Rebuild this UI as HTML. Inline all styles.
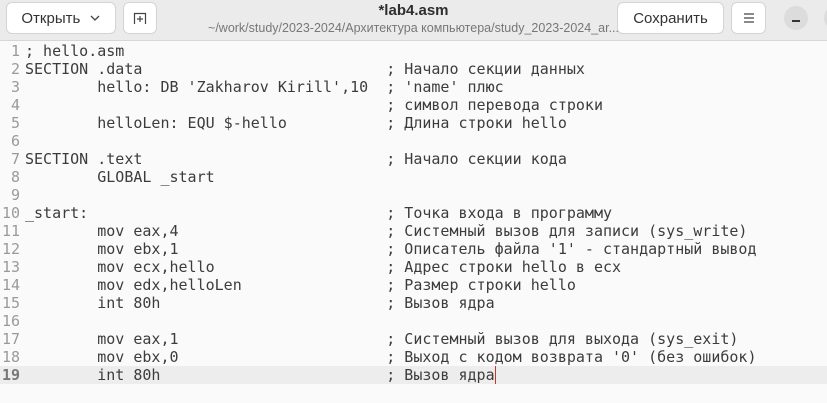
<!DOCTYPE html>
<html><head><meta charset="utf-8"><style>
*{margin:0;padding:0;box-sizing:border-box}
body{width:827px;height:403px;overflow:hidden;background:#fafafa;font-family:"Liberation Sans","DejaVu Sans",sans-serif;position:relative}
.hdr{position:absolute;left:0;top:0;width:827px;height:41px;background:#ebebeb;border-bottom:1px solid #d6d6d6}
.btn{position:absolute;top:2px;height:32px;background:#fff;border:1px solid #d4d4d4;border-radius:6px;font-size:15px;color:#333;display:flex;align-items:center;justify-content:center}
.title{position:absolute;left:0;width:827px;text-align:center}
.ed{position:absolute;left:0;top:42px;width:827px;font-family:"DejaVu Sans Mono",monospace;font-size:15px;color:#3c3c3c}
.l{height:18px;line-height:19px;white-space:pre;position:relative}
.n{display:inline-block;width:20px;text-align:right;color:#9a9a9a;margin-right:5px}
.cur{background:#ededed}
.cur .n{color:#777;font-weight:bold}
</style></head><body>
<div class="hdr">
<div class="btn" style="left:6px;width:110px">Открыть&nbsp;&nbsp;<svg width="12" height="8" viewBox="0 0 12 8"><path d="M2 2l4 4 4-4" fill="none" stroke="#444" stroke-width="1.3"/></svg></div>
<div class="btn" style="left:123px;width:34px"><svg width="14" height="14" viewBox="0 0 14 14"><path d="M1.5 13V2.5h11V13M7 5v6M4 8h6" fill="none" stroke="#444" stroke-width="1.2"/></svg></div>
<div class="title" style="top:2px;font-weight:bold;font-size:15px;color:#2e2e2e">*lab4.asm</div>
<div class="title" style="top:21px;font-size:12.5px;color:#777">~/work/study/2023-2024/Архитектура компьютера/study_2023-2024_ar...</div>
<div class="btn" style="left:617px;width:107px">Сохранить</div>
<div class="btn" style="left:731px;width:35px"><svg width="12" height="10" viewBox="0 0 12 10"><path d="M1 1h10M1 5h10M1 9h10" stroke="#444" stroke-width="1.2"/></svg></div>
<div style="position:absolute;left:784px;top:6px;width:24px;height:24px;border-radius:12px;background:#dcdcdc"><div style="position:absolute;left:8px;top:14px;width:8px;height:1.5px;background:#333"></div></div>
<div style="position:absolute;left:824px;top:6px;width:24px;height:24px;border-radius:12px;background:#dcdcdc"></div>
</div>
<div class="ed">
<div class="l"><span class="n">1</span>; hello.asm</div>
<div class="l"><span class="n">2</span>SECTION .data                           ; Начало секции данных</div>
<div class="l"><span class="n">3</span>        hello: DB 'Zakharov Kirill',10  ; 'name' плюс</div>
<div class="l"><span class="n">4</span>                                        ; символ перевода строки</div>
<div class="l"><span class="n">5</span>        helloLen: EQU $-hello           ; Длина строки hello</div>
<div class="l"><span class="n">6</span></div>
<div class="l"><span class="n">7</span>SECTION .text                           ; Начало секции кода</div>
<div class="l"><span class="n">8</span>        GLOBAL _start</div>
<div class="l"><span class="n">9</span></div>
<div class="l"><span class="n">10</span>_start:                                 ; Точка входа в программу</div>
<div class="l"><span class="n">11</span>        mov eax,4                       ; Системный вызов для записи (sys_write)</div>
<div class="l"><span class="n">12</span>        mov ebx,1                       ; Описатель файла '1' - стандартный вывод</div>
<div class="l"><span class="n">13</span>        mov ecx,hello                   ; Адрес строки hello в ecx</div>
<div class="l"><span class="n">14</span>        mov edx,helloLen                ; Размер строки hello</div>
<div class="l"><span class="n">15</span>        int 80h                         ; Вызов ядра</div>
<div class="l"><span class="n">16</span></div>
<div class="l"><span class="n">17</span>        mov eax,1                       ; Системный вызов для выхода (sys_exit)</div>
<div class="l"><span class="n">18</span>        mov ebx,0                       ; Выход с кодом возврата '0' (без ошибок)</div>
<div class="l cur"><span class="n">19</span>        int 80h                         ; Вызов ядра<span style="border-left:1px solid #c0392b;margin-left:0"></span></div>
</div>
</body></html>
